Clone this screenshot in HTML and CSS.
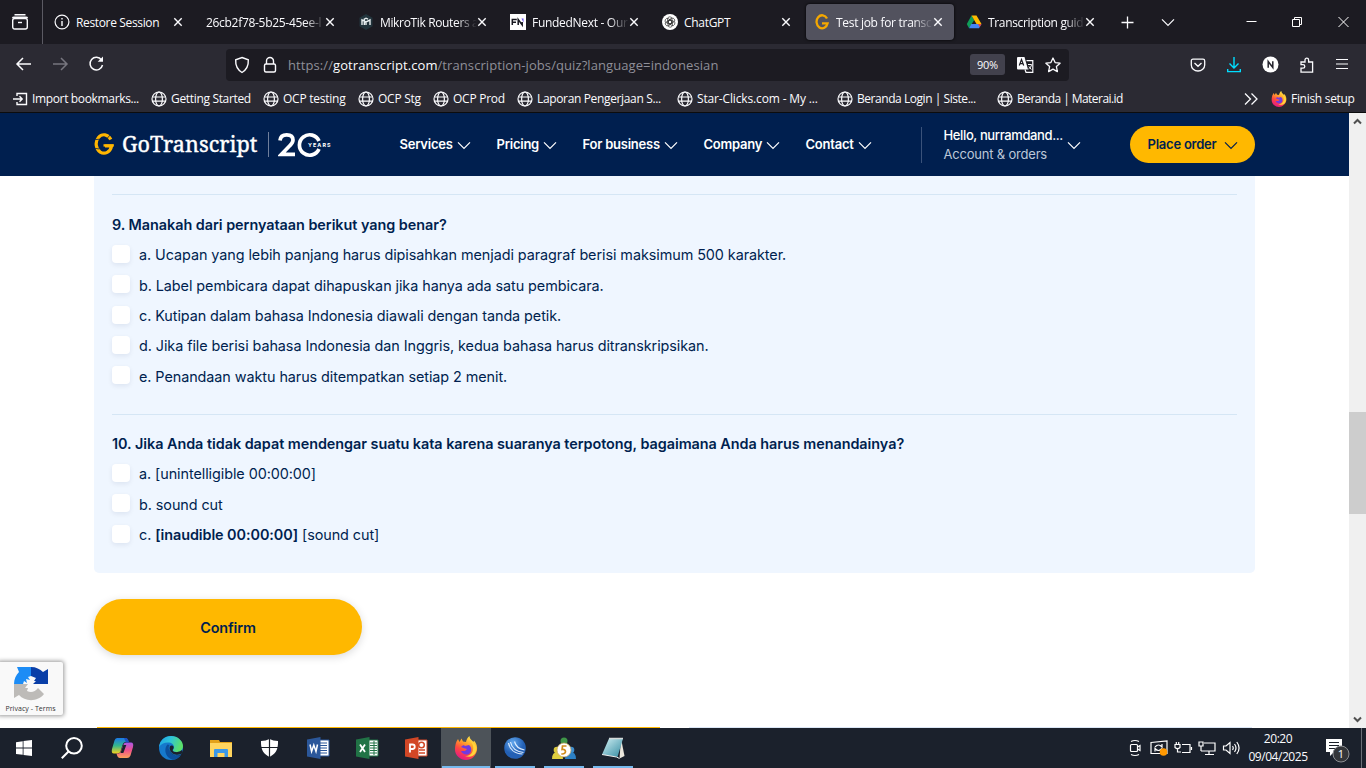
FILE: index.html
```
<!DOCTYPE html>
<html lang="id">
<head>
<meta charset="utf-8">
<title>Test job for transcription</title>
<link rel="stylesheet" href="styles.css">
</head>
<body>
<svg class="defs" width="0" height="0">
  <defs>
    <symbol id="globe" viewBox="0 0 16 16"><g fill="none" stroke="#fbfbfe" stroke-width="1.2"><circle cx="8" cy="8" r="7"/><ellipse cx="8" cy="8" rx="3.4" ry="7"/><path d="M1.3 6h13.4M1.3 10.2h13.4"/></g></symbol>
    <symbol id="close" viewBox="0 0 10 10"><path d="M1.3 1.3l7.4 7.4M8.7 1.3l-7.4 7.4" stroke="#fbfbfe" stroke-width="1.4"/></symbol>
    <symbol id="chev" viewBox="0 0 14 9"><path d="M1 1.3l6 6 6-6" fill="none" stroke="currentColor" stroke-width="1.2"/></symbol>
    <linearGradient id="fxg" x1=".8" y1="0" x2=".3" y2="1"><stop offset="0" stop-color="#fff44f"/><stop offset=".35" stop-color="#ffa52a"/><stop offset=".65" stop-color="#ff4a3f"/><stop offset="1" stop-color="#e31587"/></linearGradient>
    <symbol id="firefox" viewBox="0 0 24 24"><path d="M2.5 5.5L4 3l1.5 3 2-3.5L9 5.500c1 0 2 .2 3 .6C12.500 3 14 1 15.500 0c0 3 2.500 4 4 6l.5-1.500c2.500 3 3.500 6 3 9.500C22 20 17.500 24 12 24S1 19.500 1 13.500c0-3 .5-6 1.500-8z" fill="url(#fxg)"/><path d="M7 11c2-2 3-2 4-1l4-1c3 2 3 7 0 9-3 1.500-7 0-8-3l4 0 2-2-3-.7z" fill="#7139df"/><path d="M15 4c3 2 5 6 4 10-1 4-4 6-8 6 8 3 12-3 11.500-8C22 8 18 6 15 4z" fill="#ffd43a"/></symbol>
    <symbol id="gmark" viewBox="0 0 20 22"><path d="M16.800 6.500A7.800 9.200 0 1 0 17.600 13H11" fill="none" stroke="#ffb600" stroke-width="3.200"/><path d="M9.500 11.200h10.300v2.400H9.500z" fill="#ffb600"/><path d="M0 6.800l5.500-.6M0 15.200l5.500.8M13.500 5l3-3.500" stroke="#001f4f" stroke-width=".8"/></symbol>
    <linearGradient id="edg" x1="0" y1="0" x2="1" y2=".3"><stop offset="0" stop-color="#1c9fe8"/><stop offset=".5" stop-color="#2fc5d8"/><stop offset="1" stop-color="#5be06a"/></linearGradient>
    <linearGradient id="cp1" x1="0" y1="0" x2="0" y2="1"><stop offset="0" stop-color="#1b79e8"/><stop offset=".5" stop-color="#35b88b"/><stop offset="1" stop-color="#f6d31e"/></linearGradient>
    <linearGradient id="cp2" x1="0" y1="0" x2="0" y2="1"><stop offset="0" stop-color="#a957e8"/><stop offset=".5" stop-color="#f0518a"/><stop offset="1" stop-color="#fda35a"/></linearGradient>
    <radialGradient id="orb" cx=".4" cy=".25"><stop offset="0" stop-color="#62a8ee"/><stop offset="1" stop-color="#2360b4"/></radialGradient>
    <linearGradient id="note" x1="0" y1="0" x2="1" y2="1"><stop offset="0" stop-color="#d3f1f5"/><stop offset="1" stop-color="#318aa0"/></linearGradient>
  </defs>
</svg>

<header class="tabs">
  <div class="view"><svg width="18" height="18" viewBox="0 0 18 18" fill="none" stroke="#fbfbfe" stroke-width="1.4"><path d="M3.500 1.700h11M1.500 5.200q.3-1 1.500-1h12q1.200 0 1.500 1"/><rect x="1.700" y="5.500" width="14.600" height="10.500" rx="2"/><path d="M7 9.500h4"/></svg></div>
  <div class="tab"><svg class="fav" viewBox="0 0 16 16"><circle cx="8" cy="8" r="6.900" fill="none" stroke="#fbfbfe" stroke-width="1.200"/><path d="M8 7v5M8 4v1.600" stroke="#fbfbfe" stroke-width="1.400"/></svg><span class="lbl t1">Restore Session</span><svg class="x"><use href="#close"/></svg></div>
  <div class="tab"><span class="lbl t2 fade">26cb2f78-5b25-45ee-l</span><svg class="x"><use href="#close"/></svg></div>
  <div class="tab"><svg class="fav" viewBox="0 0 16 16"><path d="M8 0l6.500 3.700v8.600L8 16l-6.500-3.700V3.700z" fill="#22343c"/><path d="M4 11V6l4 2 4-2v5M6.300 11V5.200L8 4.200l2 1M8 8v3" fill="none" stroke="#e8eef0" stroke-width="1.400"/></svg><span class="lbl t3 fade">MikroTik Routers a</span><svg class="x"><use href="#close"/></svg></div>
  <div class="tab"><svg class="fav" viewBox="0 0 16 16"><rect width="16" height="16" fill="#fff"/><path d="M2.300 11V5.500h4.500M2.300 8.300H6M8.200 11V5.500l4 5.500V8" fill="none" stroke="#17171f" stroke-width="1.500"/><path d="M11.500 4.500h2v4z" fill="#6a4cf0"/></svg><span class="lbl t4 fade">FundedNext - Our</span><svg class="x"><use href="#close"/></svg></div>
  <div class="tab"><svg class="fav" viewBox="0 0 16 16"><circle cx="8" cy="8" r="8" fill="#fff"/><g fill="none" stroke="#333" stroke-width=".7"><rect x="5.600" y="2.800" width="4.400" height="7" rx="2.200"/><rect x="5.600" y="2.800" width="4.400" height="7" rx="2.200" transform="rotate(60 8 8)"/><rect x="5.600" y="2.800" width="4.400" height="7" rx="2.200" transform="rotate(120 8 8)"/><rect x="5.600" y="2.800" width="4.400" height="7" rx="2.200" transform="rotate(180 8 8)"/><rect x="5.600" y="2.800" width="4.400" height="7" rx="2.200" transform="rotate(240 8 8)"/><rect x="5.600" y="2.800" width="4.400" height="7" rx="2.200" transform="rotate(300 8 8)"/></g></svg><span class="lbl t5">ChatGPT</span><svg class="x"><use href="#close"/></svg></div>
  <div class="tab active"><svg class="fav" viewBox="0 0 16 16"><path d="M13 4.500A5.600 6.500 0 1 0 13.600 9.300H8" fill="none" stroke="#f5a800" stroke-width="2.300"/></svg><span class="lbl t6 fade">Test job for transc</span><svg class="x"><use href="#close"/></svg></div>
  <div class="tab"><svg class="fav" viewBox="0 0 16 16"><path d="M5.500 1.500L.8 10l2.200 4.200L8.200 6z" fill="#0f9d58"/><path d="M5.500 1.500h5L15.500 10h-5z" fill="#ffba00"/><path d="M5.300 10h10.200l-2.500 4.200H3z" fill="#4285f4"/><path d="M12 10h3.500L13.700 13z" fill="#ea4335"/></svg><span class="lbl t7 fade">Transcription guid</span><svg class="x"><use href="#close"/></svg></div>
  <svg class="plus" width="13" height="13" viewBox="0 0 13 13"><path d="M6.500 .5v12M.5 6.500h12" stroke="#fbfbfe" stroke-width="1.300"/></svg>
  <svg class="alltabs" width="14" height="9"><use href="#chev"/></svg>
  <svg class="win" width="114" height="14" viewBox="0 0 114 14" fill="none" stroke="#fff"><path d="M.5 6.500h10"/><path d="M46.500 4.500h7v7h-7zM48.500 4.500v-2h7v7h-2"/><path d="M92.500 2l10 10M102.500 2l-10 10"/></svg>
</header>

<div class="toolbar">
  <svg class="navs" width="96" height="18" viewBox="0 0 96 18" fill="none" stroke="#fbfbfe" stroke-width="1.500"><path d="M16 9H2M8 3L2 9l6 6"/><path d="M38 9h13M46 3l6 6-6 6" stroke="#77767f"/><path d="M86.500 5A6.300 6.300 0 1 0 87.500 10"/><path d="M88 1.500v5.300h-5.300z" fill="#fbfbfe" stroke="none"/></svg>
  <div class="url">
    <svg class="lock" width="44" height="18" viewBox="0 0 44 18" fill="none" stroke="#fbfbfe" stroke-width="1.400"><path d="M8 1.500l6.300 2.300c.3 5-1 9.500-6.300 12.700C2.700 13.300 1.400 8.800 1.700 3.800z"/><rect x="30.500" y="8" width="11" height="8" rx="1.500"/><path d="M32.500 8V5a3.500 3.500 0 0 1 7 0v3"/></svg>
    <span class="addr">https://<b>gotranscript.com</b>/transcription-jobs/quiz?language=indonesian</span>
    <span class="pct">90%</span>
    <svg class="tr" width="17" height="16" viewBox="0 0 17 16"><path d="M1 0h6.500L11 12.500H1q-1 0-1-1V1q0-1 1-1z" fill="#fbfbfe"/><path d="M2.300 8.500L4.500 2.500 6.700 8.500M3.200 6.700h2.600" stroke="#1c1b22" stroke-width="1.200" fill="none"/><path d="M9.500 3.700h6.300v11.600H9L8 12.500" fill="none" stroke="#fbfbfe" stroke-width="1.200"/><path d="M11 7.500h3.500c0 2-1.500 3.500-3 4.500M12 9.500l2.300 3" fill="none" stroke="#fbfbfe"/></svg>
    <svg width="16" height="16" viewBox="0 0 16 16"><path d="M8 1l2.100 4.600 5 .6-3.700 3.400 1 5L8 12.100l-4.400 2.500 1-5L.9 6.200l5-.6z" fill="none" stroke="#fbfbfe" stroke-width="1.300" stroke-linejoin="round"/></svg>
  </div>
  <div class="tools">
    <svg width="16" height="16" viewBox="0 0 16 16" fill="none" stroke="#fbfbfe" stroke-width="1.300"><path d="M3 2.200h10q1.700 0 1.700 1.700V8a6.700 6 0 0 1-13.400 0V3.900Q1.300 2.200 3 2.200zM4.500 6L8 9.300 11.500 6"/></svg>
    <svg width="16" height="16" viewBox="0 0 16 16" fill="none" stroke="#00ddff" stroke-width="1.400"><path d="M8 0v10.500M3.500 6.500L8 11l4.500-4.500M1.700 12v2.600h12.600V12"/></svg>
    <svg width="17" height="17" viewBox="0 0 17 17"><circle cx="8.500" cy="8.500" r="8" fill="#fff"/><path d="M6.200 11.800V5.500l4.600 6V5.200" fill="none" stroke="#24232c" stroke-width="1.500"/></svg>
    <svg width="16" height="16" viewBox="0 0 16 16" fill="none" stroke="#fbfbfe" stroke-width="1.300"><path d="M2 15.200v-4h2a1.700 1.700 0 0 0 0-3.600H2V5h4V3a1.700 1.700 0 0 1 3.600 0v2h4v10.200z"/></svg>
    <svg width="14" height="16" viewBox="0 0 14 16" stroke="#fbfbfe" stroke-width="1.200"><path d="M1 2.500h12M1 7h12M1 11.500h12"/></svg>
  </div>
</div>

<nav class="marks">
  <a class="m0"><svg viewBox="0 0 16 16" fill="none" stroke="#fbfbfe" stroke-width="1.400"><path d="M5 5V2.500h9.500v11H5V11M1 8h9M7.500 5.300L10.200 8l-2.700 2.700"/></svg><span>Import bookmarks...</span></a>
  <a class="m1"><svg><use href="#globe"/></svg><span>Getting Started</span></a>
  <a class="m2"><svg><use href="#globe"/></svg><span>OCP testing</span></a>
  <a class="m3"><svg><use href="#globe"/></svg><span>OCP Stg</span></a>
  <a class="m4"><svg><use href="#globe"/></svg><span>OCP Prod</span></a>
  <a class="m5"><svg><use href="#globe"/></svg><span>Laporan Pengerjaan S...</span></a>
  <a class="m6"><svg><use href="#globe"/></svg><span>Star-Clicks.com - My ...</span></a>
  <a class="m7"><svg><use href="#globe"/></svg><span>Beranda Login | Siste...</span></a>
  <a class="m8"><svg><use href="#globe"/></svg><span>Beranda | Materai.id</span></a>
  <svg class="more" viewBox="0 0 14 14" fill="none" stroke="#fbfbfe" stroke-width="1.300"><path d="M1 1.500L6.500 7 1 12.500M7.500 1.500L13 7l-5.500 5.500"/></svg>
  <a class="m9"><svg><use href="#firefox"/></svg><span>Finish setup</span></a>
</nav>

<div class="viewport">
  <div class="page">
    <header class="site">
      <svg class="g" width="20" height="22"><use href="#gmark"/></svg>
      <span class="brand">GoTranscript</span>
      <i class="bar1"></i>
      <svg class="twenty" width="54" height="26" viewBox="0 0 54 26"><path d="M2 8.500C2.300 4.800 5 2.800 8.700 2.800c4 0 6.300 2 6.300 5.200 0 2.300-1.200 3.800-3.300 5.800L3.500 22.300H17" fill="none" stroke="#fff" stroke-width="3.700"/><path d="M41 9A10.200 10.200 0 1 0 41 17" fill="none" stroke="#fff" stroke-width="3.700"/><text x="30" y="15" textLength="22.500" font-family="Inter, sans-serif" font-weight="700" font-size="5.400" fill="#fff">YEARS</text></svg>
      <nav class="menu">
        <a class="n1">Services<svg><use href="#chev"/></svg></a>
        <a class="n2">Pricing<svg><use href="#chev"/></svg></a>
        <a class="n3">For business<svg><use href="#chev"/></svg></a>
        <a class="n4">Company<svg><use href="#chev"/></svg></a>
        <a class="n5">Contact<svg><use href="#chev"/></svg></a>
      </nav>
      <div class="acct"><div><p>Hello, nurramdand...</p><p class="dim">Account &amp; orders</p></div><svg><use href="#chev"/></svg></div>
      <button class="order">Place order<svg><use href="#chev"/></svg></button>
    </header>
    <main class="quiz">
      <section class="q">
        <h2>9. Manakah dari pernyataan berikut yang benar?</h2>
        <label><i></i><span>a. Ucapan yang lebih panjang harus dipisahkan menjadi paragraf berisi maksimum 500 karakter.</span></label>
        <label><i></i><span>b. Label pembicara dapat dihapuskan jika hanya ada satu pembicara.</span></label>
        <label><i></i><span>c. Kutipan dalam bahasa Indonesia diawali dengan tanda petik.</span></label>
        <label><i></i><span>d. Jika file berisi bahasa Indonesia dan Inggris, kedua bahasa harus ditranskripsikan.</span></label>
        <label><i></i><span>e. Penandaan waktu harus ditempatkan setiap 2 menit.</span></label>
      </section>
      <section class="q second">
        <h2>10. Jika Anda tidak dapat mendengar suatu kata karena suaranya terpotong, bagaimana Anda harus menandainya?</h2>
        <label><i></i><span>a. [unintelligible 00:00:00]</span></label>
        <label><i></i><span>b. sound cut</span></label>
        <label><i></i><span>c. <b>[inaudible 00:00:00]</b> [sound cut]</span></label>
      </section>
    </main>
    <button class="confirm">Confirm</button>
    <div class="cards"><i></i><i></i></div>
    <div class="captcha">
      <svg width="36" height="36" viewBox="0 0 36 36"><path d="M1 18C1 13 3 9 6 6L4 1h14v9l-3 1 2 3-4-1 1 4-3-2-1 3z" fill="#1c8cf5"/><path d="M18 1c5 0 9 2 12 5l5-3v15H20l3-3-2 0 2-3-5-2z" fill="#0a3fa8"/><path d="M1 18h14l-3 4 3 0-1 3c4 2 8 1 11-3l6 6c-6 8-19 8-25 1l-5 3z" fill="#bdbbb8"/></svg>
      <span>Privacy - Terms</span>
    </div>
  </div>
  <aside class="scroll"><svg width="9" height="7" viewBox="0 0 9 7"><path d="M1 5.500L4.500 2 8 5.500" fill="none" stroke="#505050" stroke-width="2"/></svg><i></i><svg width="9" height="7" viewBox="0 0 9 7"><path d="M1 1.500L4.500 5 8 1.500" fill="none" stroke="#505050" stroke-width="2"/></svg></aside>
</div>

<footer class="task">
  <div class="app"><svg width="16" height="16" viewBox="0 0 16 16" fill="#fff"><path d="M0 2.200L6.700 1.200V7.500H0zM7.500 1.100L16 0v7.500H7.500zM0 8.400h6.700v6.400L0 13.900zM7.500 8.400H16V16l-8.500-1.100z"/></svg></div>
  <div class="app find"><svg width="22" height="22" viewBox="0 0 22 22" fill="none" stroke="#fff" stroke-width="2"><circle cx="13" cy="8.800" r="7.800"/><path d="M7.500 14.500L.8 21.300"/></svg></div>
  <div class="app"><svg width="23" height="22" viewBox="0 0 23 22"><path d="M6 1h8.500q2 0 3 4h-3q-2 0-3 3l-2 6.500q-.8 2-3 2H3Q0 16.500 1 12L3.500 3.500Q4.300 1 6 1z" fill="url(#cp1)"/><path d="M17.500 5.500H20q3 0 2 4.500l-2.500 8.500Q18.500 21 16 21H9q-2.500 0-3.500-4.500h2q1.500 0 2.300-2L12 8.500q1-3 3-3z" fill="url(#cp2)"/><path d="M12.300 8h3l-3 8H9.500z" fill="#1b212c"/><path d="M13 1h2q2 0 3 4.500h-3z" fill="#1d4fc4"/></svg></div>
  <div class="app"><svg width="24" height="24" viewBox="0 0 24 24"><circle cx="12" cy="12" r="12" fill="#1679cc"/><path d="M8.500 8.500c-3 3-3 9 1 13 1.500 1.300 3.500 2.400 5.500 2.200 3-.7 5.500-2.500 7-5-4 1.500-8 .5-10.500-2.200C9.500 14 9 11 10.500 9z" fill="#0c4f9c"/><path d="M0 11C.8 4.500 5.500 0 12 0c7 0 12 5 12 10 0 4-3 6-6.500 6-2 0-3.500-.8-3.500-1.700 0-.8 1-1.300 1-3C15 8.500 12.500 6.500 9 6.500c-4 0-7.500 2-9 4.500z" fill="url(#edg)"/><path d="M10.700 10.500c-1 3 0 6 3 8 3 1.800 6.500 1.300 9-.6l1.300 3-3 3.100q2-2 2-5.200c-3 1.500-6.300 1.300-9-.6-3-2-4.300-5-3.300-7.700z" fill="#1b212c"/><path d="M10.700 10.700q1-1.500 2.600-1.200 1.500.6 1.400 2.300c-.2 1.300-1.200 1.600-1 2.600.3 1 1.700 1.700 3.300 1.700 2.300.2 4.700-.8 6-2l.8 3c-3 2.200-7 2.300-10 .3-2.500-1.700-3.600-4.300-3.100-6.700z" fill="#1b212c"/></svg></div>
  <div class="app"><svg width="22" height="19" viewBox="0 0 22 19"><path d="M0 1h9l1 2h12v15H0z" fill="#e3a21a"/><path d="M0 4h22v14H0z" fill="#ffd55f"/><path d="M4 18v-7q0-1 1-1h12q1 0 1 1v7h-3.500v-4h-7v4z" fill="#3a98e8"/></svg></div>
  <div class="app"><svg width="17" height="18" viewBox="0 0 17 18"><path d="M8.500 0Q12 2 17 2c.3 8-2 13-8.500 16C2 15 -.3 10 0 2q5 0 8.500-2z" fill="#fff"/><path d="M8.500 0v18M0 8.500h17" stroke="#1b2028" stroke-width="1.200"/></svg></div>
  <div class="app"><svg width="23" height="22" viewBox="0 0 23 22"><path d="M12 3h10v16H12z" fill="#fff" stroke="#2b579a"/><path d="M13 6h7M13 8.500h7M13 11h7M13 13.500h7M13 16h7" stroke="#2b579a"/><path d="M0 2.500L13.500 0v22L0 19.500z" fill="#2b579a"/><path d="M3 7.500l1.600 7L6.800 8 9 14.500l1.500-7" fill="none" stroke="#fff" stroke-width="1.500"/></svg></div>
  <div class="app"><svg width="23" height="22" viewBox="0 0 23 22"><path d="M12 3h10v16H12z" fill="#fff" stroke="#217346"/><path d="M14 6h7M14 8.500h7M14 11h7M14 13.500h7M14 16h7M18 4v14" stroke="#217346"/><path d="M0 2.500L13.500 0v22L0 19.500z" fill="#217346"/><path d="M4 7.500l5 7.500M9 7.500L4 15" stroke="#fff" stroke-width="1.800"/></svg></div>
  <div class="app"><svg width="23" height="22" viewBox="0 0 23 22"><path d="M12 3h10v16H12z" fill="#fff" stroke="#d24726"/><circle cx="16.500" cy="8" r="2.800" fill="none" stroke="#d24726" stroke-width="1.500"/><path d="M14 13h6M14 16h6" stroke="#d24726" stroke-width="1.300"/><path d="M0 2.500L13.500 0v22L0 19.500z" fill="#d24726"/><path d="M5 15.500V7.500h2.500a2 2 0 0 1 0 4.500H5" fill="none" stroke="#fff" stroke-width="1.800"/></svg></div>
  <div class="app on cur"><svg width="24" height="24"><use href="#firefox"/></svg></div>
  <div class="app on"><svg width="22" height="22" viewBox="0 0 22 22"><circle cx="11" cy="11" r="10.800" fill="url(#orb)"/><path d="M4.500 6c1 6 6 10.500 14 11M6.500 5c1 5 5 9.500 13 10.500M10.500 4.500c1 4 4 7.500 10 8.500" fill="none" stroke="#dcecff" stroke-width="1.200"/></svg></div>
  <div class="app on"><svg width="24" height="23" viewBox="0 0 24 23"><circle cx="12" cy="4" r="3.500" fill="#3f9648"/><path d="M5.500 12Q6 6 12 6t6.500 6z" fill="#348b3d"/><circle cx="5" cy="13" r="3.300" fill="#d9c93c"/><path d="M0 22q0-7 5.500-7T11 22z" fill="#dfcf3f"/><circle cx="19" cy="13" r="3.300" fill="#3f8fd0"/><path d="M13 22q0-7 5.500-7T24 22z" fill="#2c80c4"/><circle cx="12" cy="13" r="7" fill="#fff" stroke="#c9a45a" stroke-width=".7"/><path d="M14.500 9h-4l-.4 3.500c4-1 5 4.500 0 4.500H9.300" fill="none" stroke="#cf8c1c" stroke-width="1.700"/></svg></div>
  <div class="app on"><svg width="23" height="22" viewBox="0 0 23 22"><path d="M19 1.500l3.500 17.500-5 2.500z" fill="#ece8dd"/><path d="M7 1.500h14L15.500 20 0 17.500z" fill="url(#note)"/><path d="M7 1.500h14" stroke="#d4dada" stroke-width="1.500"/><path d="M0 17.500L14.500 20l3 1.500" fill="none" stroke="#eee"/></svg></div>
  <div class="tray">
    <svg width="112" height="18" viewBox="0 0 112 18" fill="none" stroke="#fff" stroke-width="1.200"><rect x="1.500" y="5.500" width="7" height="7" rx="1"/><path d="M8.500 8l2.500-1.500v5L8.500 10M2 2.500q4-2 8 0M2 15.500q4 2 8 0"/><path d="M22 3.500l16-1.500v12.500H22z"/><path d="M26 8q3.500-4 7 0V5M33 9.500q-3.500 4-7 0v3"/><circle cx="34.500" cy="13" r="3.800" fill="#ff9800" stroke="none"/><path d="M46 5.500h5v3q-2.500 2.500-5 0zM47.300 3v2.500M49.700 3v2.500M48.500 10v3H52M53 5.500h8v8h-8M62.500 8v3"/><path d="M75 4h11v8H72M80 12v3M76 15.500h9M70 3h4v4h-4zM72 7v5"/><path d="M94.500 7h2.500l4-3.500v11L97 11h-2.500zM103.500 7q1.500 2 0 4M105.500 5q3 4 0 8M107.800 3q4.500 6 0 12"/></svg>
    <div class="clock"><span>20:20</span><span>09/04/2025</span></div>
    <svg class="act" width="26" height="26" viewBox="0 0 26 26"><path d="M1 2h16v13H9l-4 4v-4H1z" fill="#fff"/><path d="M4 5.500h10M4 8.500h10M4 11.500h7" stroke="#1b2028" stroke-width="1.200"/><circle cx="16" cy="17" r="8" fill="#34363a" stroke="#8c8e92"/><text x="16" y="21" text-anchor="middle" font-family="Open Sans, sans-serif" font-size="11" fill="#fff">1</text></svg>
    <i class="peek"></i>
  </div>
</footer>
</body>
</html>
```
FILE: styles.css
```
* { box-sizing: border-box; }
body { margin: 0; width: 1366px; height: 768px; overflow: hidden; font-family: "Open Sans", sans-serif; font-size: 12px; color: #fbfbfe; background: #fff; display: flex; flex-direction: column; }
svg { flex: none; display: block; }
.defs { position: absolute; }
p, h2 { margin: 0; }
span { white-space: nowrap; }

.tabs { height: 44px; flex: none; background: #1c1b22; display: flex; align-items: center; }
.view { width: 43px; height: 44px; flex: none; border-right: 1px solid #5b5a63; display: flex; align-items: center; padding-left: 11px; margin-right: 3px; }
.tab { width: 148px; height: 36px; margin-right: 4px; flex: none; border-radius: 4px; display: flex; align-items: center; padding: 0 11px 0 8px; }
.tab.active { background: #52525e; box-shadow: 0 0 3px #000; }
.fav { width: 16px; height: 16px; margin-right: 6px; }
.lbl { flex: 1; min-width: 0; line-height: 18px; margin-top: 1px; }
.fade { -webkit-mask-image: linear-gradient(90deg, #000 calc(100% - 20px), transparent); mask-image: linear-gradient(90deg, #000 calc(100% - 20px), transparent); }
.x { width: 10px; height: 10px; }
.t1 { letter-spacing: -0.35px; }
.t2 { letter-spacing: -0.3px; }
.t3, .t7 { letter-spacing: -0.35px; }
.t4, .t5, .t6 { letter-spacing: -0.3px; }
.plus { margin-left: 11px; }
.alltabs { margin-left: 27px; }
.win { margin-left: 71px; }

.toolbar { height: 41px; flex: none; background: #2b2a33; display: flex; align-items: center; }
.navs { margin-left: 15px; margin-top: -1px; }
.url { margin-left: 115px; width: 843px; height: 32px; background: #1c1b22; border-radius: 4px; display: flex; align-items: center; padding: 0 8px; }
.addr { font-size: 13px; color: #8f8f98; margin-left: 10px; width: 682px; letter-spacing: 0.085px; }
.addr b { font-weight: 400; color: #fbfbfe; }
.pct { width: 35px; height: 21px; background: #42414d; border-radius: 3px; font-size: 11px; text-align: center; line-height: 21px; letter-spacing: -0.3px; }
.tr { margin: 0 11px 0 12px; }
.tools { flex: 1; display: flex; align-items: center; justify-content: space-between; padding: 0 17px 0 121px; }

.marks { height: 27px; flex: none; background: #2b2a33; display: flex; align-items: center; padding-left: 12px; }
.marks a { display: flex; align-items: center; gap: 4px; flex: none; }
.marks a svg { width: 16px; height: 16px; }
.m0 { width: 139px; letter-spacing: -0.35px; } .m1 { width: 112px; letter-spacing: -0.33px; } .m2 { width: 95px; letter-spacing: -0.25px; }
.m3 { width: 75px; letter-spacing: -0.25px; } .m4 { width: 84px; letter-spacing: -0.25px; } .m5 { width: 160px; letter-spacing: -0.35px; }
.m6 { width: 160px; letter-spacing: -0.15px; } .m7 { width: 160px; letter-spacing: -0.45px; } .m8 { width: 247px; letter-spacing: -0.55px; }
.m9 { letter-spacing: -0.3px; }
.more { width: 14px; height: 14px; margin-right: 13px; }

.viewport { height: 616px; flex: none; display: flex; border-top: 1px solid #0c0c0d; font-family: Inter, sans-serif; color: #001f4f; }
.page { width: 1349px; position: relative; background: #fff; }
.site { height: 63px; background: #001f4f; color: #fff; display: flex; align-items: center; padding-left: 94px; }
.g { margin-top: -1px; }
.brand { font-family: "Noto Serif", "Liberation Serif", serif; font-size: 21.6px; margin: -3px 0 0 8px; width: 135px; -webkit-text-stroke: 0.4px #fff; }
.bar1 { width: 1px; height: 25px; background: #6f7f9c; margin: 0 9px 0 11px; }
.menu { display: flex; width: 521.5px; margin: -2px 0 0 67.5px; font-size: 13px; font-weight: 600; letter-spacing: -0.23px; }
.menu a { display: flex; align-items: center; gap: 4px; }
.menu svg, .acct svg, .order svg { width: 14px; height: 9px; margin-top: 4px; }
.n1 { width: 97px; } .n2 { width: 86px; } .n3 { width: 121px; } .n4 { width: 102px; }
.acct { height: 36px; width: 209px; border-left: 1px solid #3a527a; padding-left: 21.5px; display: flex; align-items: center; gap: 4px; font-size: 13px; font-weight: 500; line-height: 18px; letter-spacing: -0.37px; }
.acct p { margin-top: -1px; }
.acct p.dim { margin: 1px 0 0; color: #bcc7d8; font-weight: 400; letter-spacing: -0.2px; }
.acct svg { margin-top: 1px; }
.order { width: 125px; height: 37px; border: 0; border-radius: 19px; background: #ffb800; color: #001f4f; font: 600 13px Inter, sans-serif; letter-spacing: -0.23px; display: flex; align-items: center; justify-content: center; gap: 7px; padding: 0 0 1px; }
.order svg { margin-top: 3px; }

.quiz { width: 1161px; height: 397px; margin-left: 94px; padding: 18px 18px 0; background: #eff6ff; border-radius: 0 0 5px 5px; font-size: 14.4px; letter-spacing: -0.07px; }
.q { height: 220px; border-top: 1px solid #d5e6f5; padding-top: 15px; }
.q.second { height: auto; padding-top: 14px; }
.q h2 { font-size: 14.4px; font-weight: 600; line-height: 30.4px; letter-spacing: -0.035px; margin-bottom: -0.8px; }
.q label { display: flex; align-items: center; height: 30.4px; gap: 9px; }
.q i { width: 18px; height: 18px; margin-top: -2px; background: #fff; border-radius: 4px; box-shadow: 0 2px 5px rgba(0, 31, 79, 0.08); }
.q b { font-weight: 600; }
.confirm { display: block; width: 268px; height: 56px; margin: 26px 0 0 94px; border: 0; border-radius: 28px; background: #ffb800; color: #001f4f; font: 600 14.4px Inter, sans-serif; letter-spacing: -0.1px; box-shadow: 0 2px 8px rgba(0, 0, 0, 0.15); padding-top: 2px; }
.cards { display: flex; gap: 29px; padding: 72px 0 0 97px; height: 73px; }
.cards i { width: 563px; height: 1px; background: #ffb800; }
.cards i + i { background: #dbe6f5; }
.captcha { position: absolute; left: -2px; top: 549px; width: 65px; height: 53px; background: #f9f9f9; border-radius: 2px; box-shadow: 0 0 4px 1px #999; display: flex; flex-direction: column; align-items: center; padding-top: 4px; color: #333; font: 7px "Open Sans", sans-serif; }
.captcha span { margin-top: 2px; letter-spacing: 0.05px; }
.scroll { width: 17px; background: #f0f0f0; display: flex; flex-direction: column; align-items: center; padding: 5px 0; }
.scroll i { width: 17px; height: 102px; background: #cdcdcd; margin: 287px 0 auto; }

.task { height: 40px; flex: none; background: #1b212c; display: flex; align-items: center; }
.app { width: 49.1px; height: 40px; flex: none; display: flex; align-items: center; justify-content: center; }
.app:first-child { width: 48px; }
.app.find { padding-right: 2px; width: 49.8px; }
.app.on { background: linear-gradient(#76b9ed, #76b9ed) center bottom / 40px 2px no-repeat; }
.app.cur { background: linear-gradient(#76b9ed, #76b9ed) center bottom / 48px 2px no-repeat, #4d5359; }
.tray { margin-left: auto; height: 40px; display: flex; align-items: center; }
.clock { width: 62px; margin-left: 6px; display: flex; flex-direction: column; align-items: center; line-height: 18px; font-size: 12px; letter-spacing: -0.45px; }
.act { margin: 3px 0 0 16px; }
.peek { width: 1px; height: 40px; background: #6a6f77; margin: 0 4px 0 10px; }
```
